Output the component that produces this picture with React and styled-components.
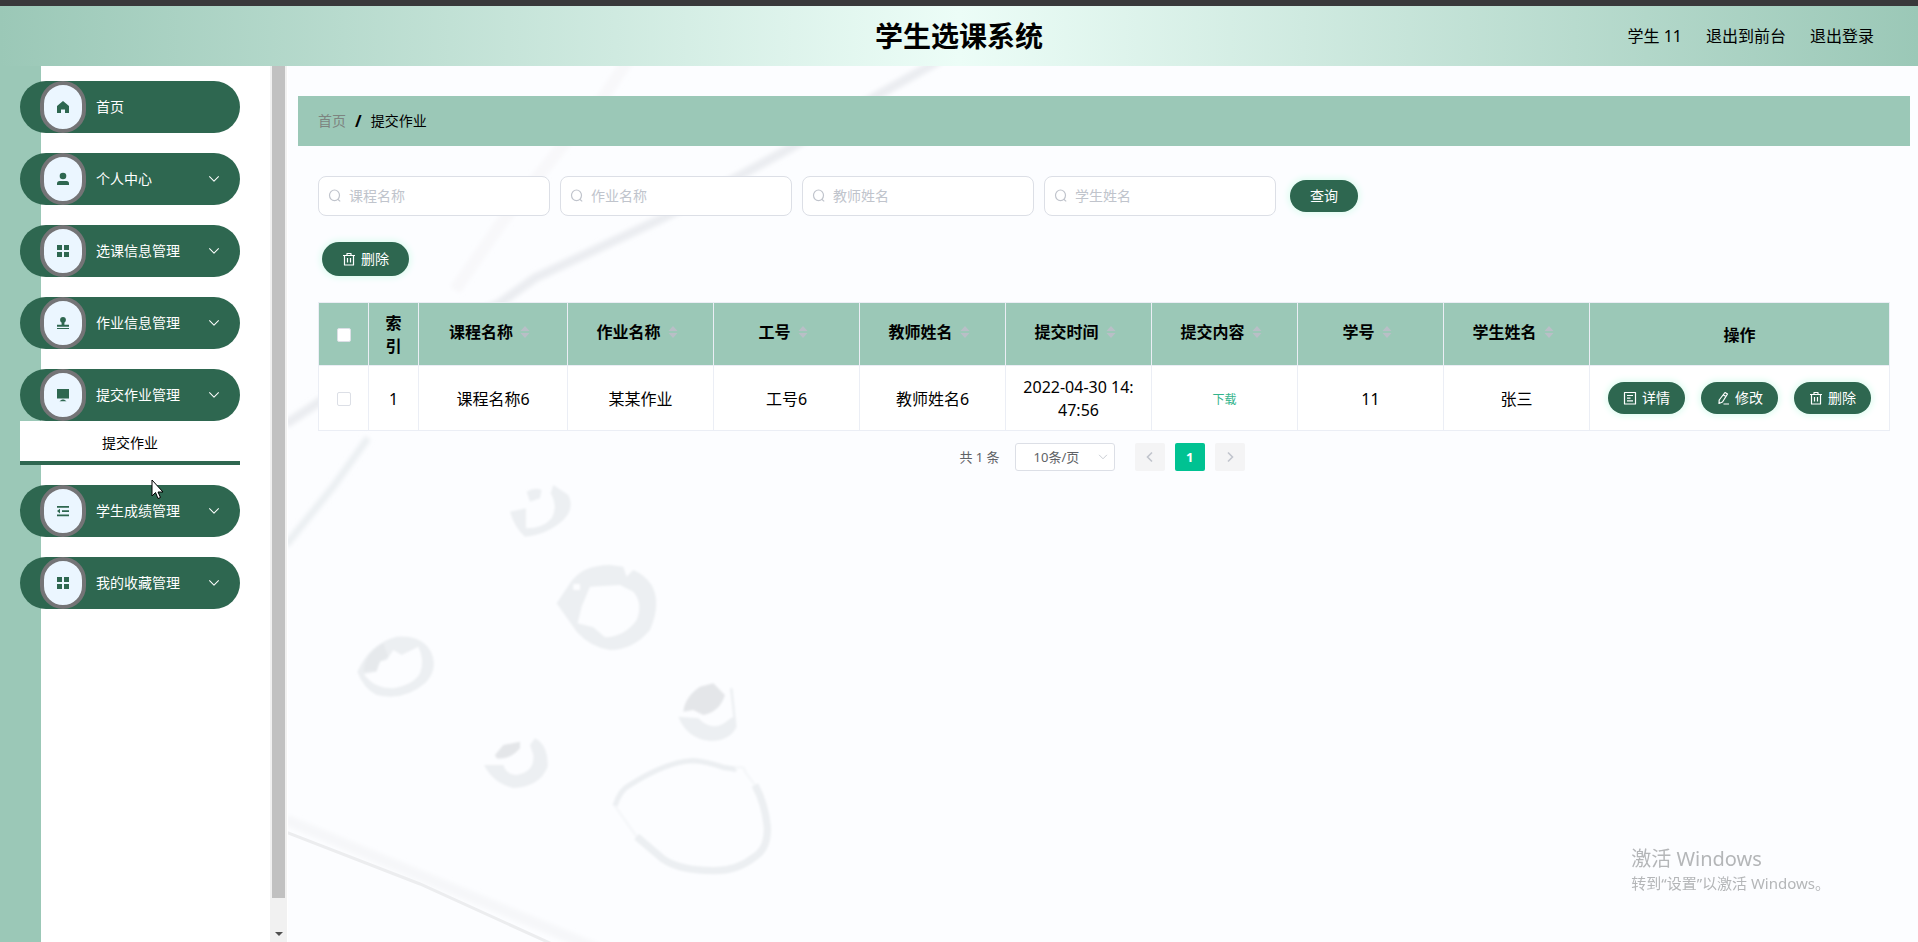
import React from 'react';
import styled, { createGlobalStyle, css } from 'styled-components';

const color = {
  pine: '#2e6750',
  sage: '#9bc8b7',
  mint: '#dffcf1',
  line: '#ebeef5',
  field: '#dcdfe6',
  hint: '#c0c4cc',
  accent: '#00c292',
};

const GlobalStyle = createGlobalStyle`
  * { box-sizing: border-box; }
  body {
    margin: 0;
    color: #000;
    font-family: "Noto Sans", "Noto Sans CJK SC", sans-serif;
    font-size: 16px;
  }
  button, input, select { font-family: inherit; }
  a { color: inherit; text-decoration: none; }
`;

const Page = styled.div`
  display: flex;
  flex-direction: column;
  min-height: 100vh;
  overflow: hidden;
`;

const TopBar = styled.header`
  display: grid;
  grid-template-columns: 1fr auto 1fr;
  align-items: center;
  height: 66px;
  padding: 0 44px;
  border-top: 6px solid #39393b;
  background: linear-gradient(90deg, ${color.sage}, #ecfdf7 50%, ${color.sage});
`;

const Title = styled.h1`
  grid-column: 2;
  margin: 0;
  font-size: 28px;
  line-height: 40px;
`;

const UserNav = styled.nav`
  display: flex;
  justify-content: flex-end;
  gap: 24px;
  line-height: 24px;
`;

const Body = styled.div`
  display: flex;
  flex: 1;
`;

const Sidebar = styled.aside`
  display: flex;
  flex: 0 0 288px;
  background: linear-gradient(90deg, ${color.sage} 41px, #fff 41px);
`;

const Menu = styled.ul`
  flex: 1;
  display: flex;
  flex-direction: column;
  gap: 20px;
  margin: 0;
  padding: 15px 30px 15px 20px;
  list-style: none;
`;

const MenuButton = styled.button`
  display: flex;
  align-items: center;
  width: 100%;
  height: 52px;
  padding: 0 20px;
  border: 0;
  border-radius: 26px;
  background: ${color.pine};
  color: #fff;
  font-size: 14px;
  line-height: 20px;
`;

const IconDisc = styled.span`
  display: flex;
  align-items: center;
  justify-content: center;
  width: 46px;
  height: 52px;
  margin-right: 10px;
  border: 4px solid #747476;
  border-radius: 24px;
  background: #ebf6ff;
  color: ${color.pine};
`;

const MenuText = styled.span`
  flex: 1;
  text-align: left;
`;

const SubMenuLink = styled.a`
  display: block;
  height: 44px;
  border-bottom: 4px solid ${color.pine};
  background: #fff;
  font-size: 14px;
  line-height: 44px;
  text-align: center;
`;

const ScrollTrack = styled.div`
  display: flex;
  flex-direction: column;
  align-items: center;
  width: 18px;
  padding-bottom: 6px;
  border-right: 1px solid #fff;
  background: #f1f1f1;
`;

const ScrollThumb = styled.div`
  flex: 1;
  width: 13px;
  margin-bottom: 34px;
  background: #c1c1c1;
`;

const Main = styled.main`
  position: relative;
  flex: 1;
  min-width: 0;
  padding: 30px 8px 0 10px;
  background: #fcfdff;
`;

const Backdrop = styled.svg`
  position: absolute;
  inset: 0;
  width: 100%;
  height: 100%;
`;

const Content = styled.div`
  position: relative;
`;

const Crumbs = styled.nav`
  display: flex;
  align-items: center;
  gap: 9px;
  height: 50px;
  padding: 0 20px;
  background: ${color.sage};
  font-size: 14px;
  line-height: 20px;
  a { color: #7d8480; }
  b { font-size: 16px; }
`;

const Panel = styled.section`
  padding: 30px 20px 0;
`;

const SearchForm = styled.form`
  display: flex;
  align-items: center;
  gap: 10px;
`;

const Field = styled.label`
  display: flex;
  align-items: center;
  gap: 7px;
  flex: 0 1 232px;
  min-width: 0;
  height: 40px;
  padding: 0 9px;
  border: 1px solid ${color.field};
  border-radius: 8px;
  background: #fff;
  color: ${color.hint};
  input {
    flex: 1;
    min-width: 0;
    padding: 0;
    border: 0;
    outline: 0;
    background: none;
    font-size: 14px;
    line-height: 20px;
  }
  input::placeholder { color: ${color.hint}; }
`;

const PillButton = styled.button`
  display: inline-flex;
  align-items: center;
  justify-content: center;
  gap: 5px;
  height: ${p => (p.$tall ? 34 : 32)}px;
  padding: 0 ${p => (p.$wide ? 20 : 15)}px;
  border: 0;
  border-radius: 17px;
  background: ${color.pine};
  box-shadow: 0 0 6px 2px ${color.mint};
  color: #fff;
  font-size: 14px;
  line-height: 20px;
  white-space: nowrap;
`;

const FormAction = styled.div`
  padding-left: 4px;
`;

const BulkActions = styled.div`
  padding: 26px 4px;
`;

const Table = styled.table`
  width: 100%;
  border-collapse: collapse;
  table-layout: fixed;
  line-height: 23px;
  text-align: center;
`;

const cell = css`
  padding: 2px 14px 0;
  border: 1px solid ${color.line};
`;

const Th = styled.th`
  ${cell}
  height: 63px;
  background: ${color.sage};
`;

const Td = styled.td`
  ${cell}
  height: 65px;
  background: #fff;
  word-break: break-all;
`;

const SortLabel = styled.span`
  display: flex;
  align-items: center;
  justify-content: center;
  padding-bottom: 6px;
  white-space: nowrap;
  svg { margin: 0 7px; }
`;

const Tick = styled.input`
  appearance: none;
  display: block;
  width: 14px;
  height: 14px;
  margin: 0 auto;
  border: 1px solid ${color.field};
  border-radius: 2px;
  background: #fff;
`;

const Download = styled.a`
  color: #33b48c;
  font-size: 12px;
`;

const RowActions = styled.div`
  display: flex;
  justify-content: center;
  gap: 16px;
  padding-bottom: 2px;
`;

const Pager = styled.nav`
  display: flex;
  align-items: center;
  justify-content: center;
  gap: 10px;
  padding: 12px 4px 12px 0;
  color: #606266;
  font-size: 13px;
  line-height: 28px;
`;

const PagerTotal = styled.span`
  margin-right: 5px;
`;

const SizePicker = styled.span`
  position: relative;
  margin-right: 10px;
  select {
    appearance: none;
    display: block;
    width: 100px;
    height: 28px;
    padding: 0 18px;
    border: 1px solid ${color.field};
    border-radius: 3px;
    background: #fff;
    color: #606266;
    font-size: 13px;
  }
  svg {
    position: absolute;
    top: 9px;
    right: 7px;
    color: ${color.hint};
  }
`;

const PageButton = styled.button`
  display: flex;
  align-items: center;
  justify-content: center;
  width: 30px;
  height: 28px;
  padding: 0;
  border: 0;
  border-radius: 2px;
  background: ${p => (p.$current ? color.accent : '#f4f4f5')};
  color: ${p => (p.$current ? '#fff' : color.hint)};
  font-size: 13px;
  font-weight: 700;
`;

const Notice = styled.div`
  position: fixed;
  right: 88px;
  bottom: 48px;
  color: #b4b6b8;
  font-size: 15px;
  line-height: 22px;
  strong {
    display: block;
    font-size: 20px;
    font-weight: 400;
    line-height: 26px;
  }
`;

const Pointer = styled.svg`
  position: fixed;
  left: 151px;
  top: 479px;
`;

const shapes = {
  home: <path d="M7 1 13 6v7H9V9.500H5V13H1V6Z" fill="currentColor" />,
  user: (
    <g fill="currentColor">
      <circle cx="7" cy="4" r="3.300" />
      <path d="M1 13v-1.500Q1 9 3.500 9h7Q13 9 13 11.500V13Z" />
    </g>
  ),
  grid: <path d="M1 1h5v5H1ZM8 1h5v5H8ZM1 8h5v5H1ZM8 8h5v5H8Z" fill="currentColor" />,
  stamp: (
    <g fill="currentColor">
      <circle cx="7" cy="3.800" r="2.900" />
      <path d="M5.600 5h2.800v3.800H13v2H1v-2h4.600ZM1 11.900h12v1.200H1Z" />
    </g>
  ),
  screen: <path d="M1 1h12v9.500H1ZM6 11.500h2l2.500 1.700h-7Z" fill="currentColor" />,
  fold: <path d="M1 2h12v1.800H1ZM6 6.200h7V8H6ZM1 10.500h12v1.800H1ZM1 7.100 4 4.800v4.600Z" fill="currentColor" />,
};

const lineShapes = {
  search: (
    <>
      <ellipse cx="6.500" cy="6.300" rx="5" ry="5.300" />
      <path d="M9.800 10.300 12.200 12.400" />
    </>
  ),
  trash: <path d="M1 3.500h12M5 3V1.500h4V3M2.500 3.500v9.500h9V3.500M5.500 6v4.500M8.500 6v4.500" />,
  doc: <path d="M1.500 1.500h11v11.500h-11ZM4 4.500h6M4 7.200h3.500M4 9.800h6" />,
  edit: <path d="M9 1.500 11.500 3 6.500 11 3 12.500 3.200 9ZM7.500 4 10 5.500M7.500 13H13" />,
  down: <path d="m1.500 4 5.500 5.500L12.500 4" />,
};

function Icon({ name, size = 14 }) {
  return (
    <svg width={size} height={size} viewBox="0 0 14 14" fill="none" aria-hidden="true">
      {shapes[name] || (
        <g stroke="currentColor" strokeWidth="1.200" strokeLinejoin="round">{lineShapes[name]}</g>
      )}
    </svg>
  );
}

function SortArrows() {
  return (
    <svg width="10" height="14" viewBox="0 0 10 14" aria-hidden="true">
      <path d="M5 1 9.500 6h-9ZM5 13 .5 8h9Z" fill="#b9bfc7" />
    </svg>
  );
}

function DropletArt() {
  return (
    <Backdrop viewBox="288 66 1630 876" preserveAspectRatio="xMinYMin slice" aria-hidden="true">
      <defs>
        <filter id="soft"><feGaussianBlur stdDeviation="2" /></filter>
        <filter id="edge"><feGaussianBlur stdDeviation="3" /></filter>
      </defs>
      <g fill="none" filter="url(#soft)">
        <path d="M940 60 878 95 792 147 665 217 535 278 500 303 390 355 286 424" stroke="#ebedf1" strokeWidth="9" />
        <path d="M628 60 605 95 559 150 502 222 455 290" stroke="#f8f8fa" strokeWidth="12" />
        <path d="M368 438 333 487 286 545" stroke="#ebeff2" strokeWidth="7" />
        <path d="M286 820 600 950" stroke="#f6f7f9" strokeWidth="11" />
      </g>
      <path d="M286 832 420 884 552 944" fill="none" stroke="#ecedef" strokeWidth="3" />
      <g transform="translate(280 440) scale(.3333)" fill="#eceff2" fillRule="evenodd" filter="url(#edge)">
        <path d="M690 215 738 205V265Q790 265 815 235 835 200 812 160L820 135 865 165Q885 205 850 240 800 285 735 290 705 265 690 215ZM740 155Q765 140 785 150L780 175 750 185Z" />
        <path d="M830 490 870 430Q905 375 990 375L1030 380 1040 410 1060 390Q1095 405 1115 435 1145 490 1110 570 1060 630 990 630 930 620 890 575ZM930 440 905 500 893 550 940 562 975 592Q1035 590 1070 540 1090 490 1060 455L1020 435ZM880 432V450H900V432Z" />
        <path d="M232 695Q270 610 350 590 430 585 455 640 475 690 435 730 370 785 290 765 250 745 232 695ZM252 702Q280 745 340 745 400 735 420 700 435 660 415 620L365 645 340 630 320 660 295 665 290 695Z" />
        <path d="M612 975H670Q680 1005 710 1005 765 995 760 945L750 915 765 895Q805 915 803 980 780 1040 700 1044 640 1030 612 975Z" />
        <path d="M1195 830 1255 835Q1300 880 1345 840L1360 830 1350 745H1358L1370 860Q1350 903 1290 903 1220 895 1195 830Z" />
        <path d="M1210 815Q1215 770 1260 740L1300 730 1335 765Q1320 815 1270 825L1240 810ZM645 945 670 915 720 905V925Q690 960 650 955Z" fill="#e4e6e9" />
        <path d="M250 695Q255 640 310 610L325 650 300 665 290 692Z" fill="#e6e9ec" />
        <g fill="none" stroke="#eceff2">
          <path d="M1005 1098Q1020 1050 1050 1035 1160 965 1240 962 1280 965 1330 982L1370 988" strokeWidth="16" />
          <path d="M1365 985Q1395 975 1395 995L1425 1035M1005 1098 1070 1190" stroke="#f5f7f9" strokeWidth="8" />
          <path d="M1425 1035Q1455 1090 1462 1160 1465 1225 1425 1250 1370 1294 1300 1292 1200 1292 1150 1258L1070 1190" strokeWidth="22" />
        </g>
      </g>
    </Backdrop>
  );
}

const menu = [
  { text: '首页', icon: 'home' },
  { text: '个人中心', icon: 'user', more: true },
  { text: '选课信息管理', icon: 'grid', more: true },
  { text: '作业信息管理', icon: 'stamp', more: true },
  { text: '提交作业管理', icon: 'screen', more: true, child: '提交作业' },
  { text: '学生成绩管理', icon: 'fold', more: true },
  { text: '我的收藏管理', icon: 'grid', more: true },
];

const filters = ['课程名称', '作业名称', '教师姓名', '学生姓名'];
const columns = ['课程名称', '作业名称', '工号', '教师姓名', '提交时间', '提交内容', '学号', '学生姓名'];
const columnWidths = [50, 50, 149, 146, 146, 146, 146, 146, 146, 146, 300];

export default function App() {
  const total = columnWidths.reduce((a, b) => a + b, 0);
  return (
    <Page>
      <GlobalStyle />
      <TopBar>
        <Title>学生选课系统</Title>
        <UserNav>
          <span>学生 11</span>
          <a href="#front">退出到前台</a>
          <a href="#logout">退出登录</a>
        </UserNav>
      </TopBar>
      <Body>
        <Sidebar>
          <Menu>
            {menu.map(item => (
              <li key={item.text}>
                <MenuButton type="button">
                  <IconDisc><Icon name={item.icon} /></IconDisc>
                  <MenuText>{item.text}</MenuText>
                  {item.more && <Icon name="down" size={12} />}
                </MenuButton>
                {item.child && <SubMenuLink href="#submit">{item.child}</SubMenuLink>}
              </li>
            ))}
          </Menu>
          <ScrollTrack>
            <ScrollThumb />
            <svg width="8" height="4" viewBox="0 0 8 4" aria-hidden="true">
              <path d="M0 0h8L4 4Z" fill="#505050" />
            </svg>
          </ScrollTrack>
        </Sidebar>
        <Main>
          <DropletArt />
          <Content>
            <Crumbs>
              <a href="#home">首页</a>
              <b>/</b>
              <span>提交作业</span>
            </Crumbs>
            <Panel>
              <SearchForm>
                {filters.map(name => (
                  <Field key={name}>
                    <Icon name="search" />
                    <input type="text" placeholder={name} aria-label={name} />
                  </Field>
                ))}
                <FormAction><PillButton type="button" $wide>查询</PillButton></FormAction>
              </SearchForm>
              <BulkActions>
                <PillButton type="button" $wide $tall><Icon name="trash" />删除</PillButton>
              </BulkActions>
              <Table>
                <colgroup>
                  {columnWidths.map((w, i) => (
                    <col key={i} style={{ width: i < 2 ? w : `${(w / total) * 100}%` }} />
                  ))}
                </colgroup>
                <thead>
                  <tr>
                    <Th><Tick type="checkbox" aria-label="全选" /></Th>
                    <Th>索引</Th>
                    {columns.map(name => (
                      <Th key={name}><SortLabel>{name}<SortArrows /></SortLabel></Th>
                    ))}
                    <Th>操作</Th>
                  </tr>
                </thead>
                <tbody>
                  <tr>
                    <Td><Tick type="checkbox" aria-label="选择" /></Td>
                    <Td>1</Td>
                    <Td>课程名称6</Td>
                    <Td>某某作业</Td>
                    <Td>工号6</Td>
                    <Td>教师姓名6</Td>
                    <Td>2022-04-30 14:47:56</Td>
                    <Td><Download href="#download">下载</Download></Td>
                    <Td>11</Td>
                    <Td>张三</Td>
                    <Td>
                      <RowActions>
                        <PillButton type="button"><Icon name="doc" />详情</PillButton>
                        <PillButton type="button"><Icon name="edit" />修改</PillButton>
                        <PillButton type="button"><Icon name="trash" />删除</PillButton>
                      </RowActions>
                    </Td>
                  </tr>
                </tbody>
              </Table>
              <Pager>
                <PagerTotal>共 1 条</PagerTotal>
                <SizePicker>
                  <select aria-label="每页条数"><option>10条/页</option></select>
                  <Icon name="down" size={10} />
                </SizePicker>
                <PageButton type="button" aria-label="上一页">
                  <svg width="12" height="12" viewBox="0 0 12 12" fill="none" stroke="currentColor" strokeWidth="1.600"><path d="M8 1.500 3.500 6 8 10.500" /></svg>
                </PageButton>
                <PageButton type="button" $current>1</PageButton>
                <PageButton type="button" aria-label="下一页">
                  <svg width="12" height="12" viewBox="0 0 12 12" fill="none" stroke="currentColor" strokeWidth="1.600"><path d="M4 1.500 8.500 6 4 10.500" /></svg>
                </PageButton>
              </Pager>
            </Panel>
          </Content>
        </Main>
      </Body>
      <Notice>
        <strong>激活 Windows</strong>
        转到“设置”以激活 Windows。
      </Notice>
      <Pointer width="14" height="21" viewBox="0 0 14 21" aria-hidden="true">
        <path d="M1 1v16l3.500-3.500L7 19.500l2.500-1L7 13h5Z" fill="#fff" stroke="#000" />
      </Pointer>
    </Page>
  );
}
